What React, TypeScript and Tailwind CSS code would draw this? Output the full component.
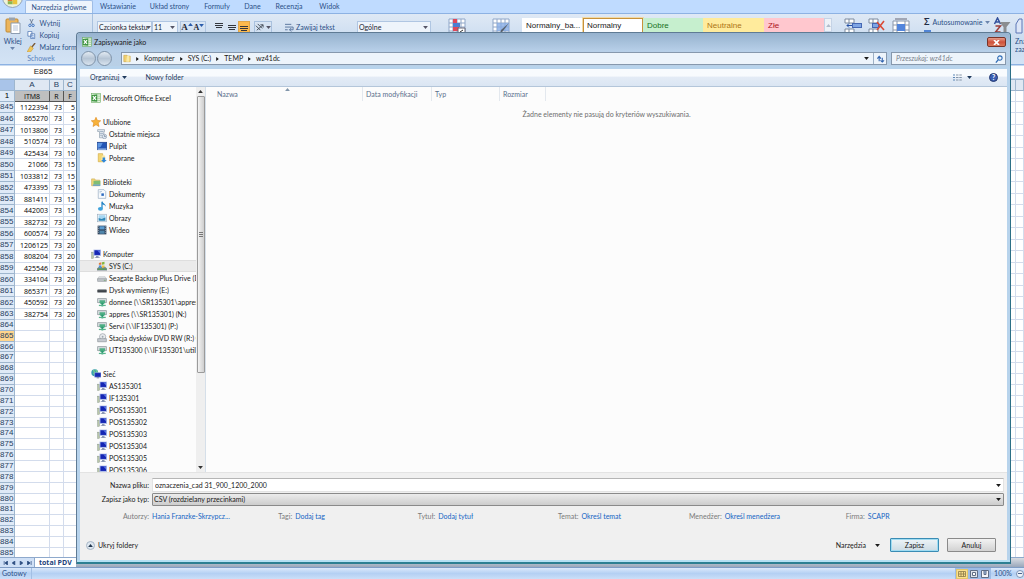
import React from "react";

type IconName =
  | "excel" | "star" | "recent" | "desktop" | "downloads" | "library" | "document" | "music"
  | "picture" | "video" | "computer" | "system" | "drive" | "removable" | "netdrive" | "dvd"
  | "network" | "host";

function Icon({ name }: { name: IconName }) {
  return (
    <svg viewBox="0 0 16 16" className="h-[10px] w-[10px] shrink-0" aria-hidden="true">
      {name === "excel" && (
        <>
          <rect x="1" y="1" width="14" height="14" fill="#e4f4e0" stroke="#6fae68" />
          <path d="M10 3h5M10 6h5M10 9h5M10 12h5" stroke="#8cc084" />
          <path d="M1 3l9-1v12l-9-1z" fill="#3d9440" />
          <path d="M3 5l5 6M8 5l-5 6" stroke="#fff" strokeWidth="2" />
        </>
      )}
      {name === "star" && (
        <path d="M8 0.5l2.3 5 5.2.5-4 3.6 1.3 5.6L8 12.300l-4.800 2.900 1.300-5.600-4-3.600 5.200-.5z" fill="#f7b23a" stroke="#e08a1c" />
      )}
      {name === "recent" && (
        <>
          <path d="M1 1h11v3h-1v10H4V4H1z" fill="#e3e9ef" stroke="#8796a6" />
          <path d="M5 4h5M5 7h5M5 10h3" stroke="#7c93ad" />
          <circle cx="12" cy="12" r="3.500" fill="#dde8f3" stroke="#8494a6" />
          <path d="M12 10v2h2" stroke="#58687a" fill="none" />
        </>
      )}
      {name === "desktop" && (
        <>
          <rect x="0.500" y="2" width="15" height="12" fill="#2255b5" stroke="#173a86" />
          <path d="M1 3h8l-3 6-5 2z" fill="#5d95e2" />
          <rect x="1" y="12" width="14" height="2" fill="#9fc0ec" />
        </>
      )}
      {name === "downloads" && (
        <>
          <path d="M2 1h7l1 13H2z" fill="#f4d673" stroke="#d0a83e" />
          <path d="M8 4h5v9H6z" fill="#f9e7a3" />
          <path d="M9 7h4v4h2.500L11 15.500 6.500 11H9z" fill="#2f87d8" />
        </>
      )}
      {name === "library" && (
        <>
          <path d="M1 3h5l1 2h7v9H1z" fill="#f2d777" stroke="#ccaa4f" />
          <rect x="4" y="6" width="11" height="6" fill="#7fbd74" />
          <path d="M3 12h12v2H3z" fill="#4f9bd6" />
        </>
      )}
      {name === "document" && (
        <>
          <path d="M2 1h9l3 3v11H2z" fill="#f7fafd" stroke="#8fa5be" />
          <path d="M4 4h4M4 6h2" stroke="#9cb3cc" />
          <rect x="7" y="7" width="4" height="4" fill="#2d6ac0" />
        </>
      )}
      {name === "music" && (
        <>
          <path d="M8 1v11" stroke="#2484c6" strokeWidth="2" />
          <path d="M8 0c1 4 6 4 6 9-1-3-3-3-6-4z" fill="#2484c6" />
          <ellipse cx="5.500" cy="12.500" rx="4" ry="3" fill="#3ea2dc" />
        </>
      )}
      {name === "picture" && (
        <>
          <rect x="1" y="2" width="14" height="12" fill="#fff" stroke="#94a9bd" />
          <rect x="2.500" y="3.500" width="11" height="5" fill="#a5d6f2" />
          <path d="M2.500 8l5 1 6-2v5.500h-11z" fill="#2c86b8" />
        </>
      )}
      {name === "video" && (
        <>
          <rect x="1" y="1" width="14" height="14" fill="#34475e" />
          <rect x="4" y="2" width="8" height="5" fill="#5b9bcf" />
          <rect x="4" y="9" width="8" height="5" fill="#4f86ac" />
          <path d="M2.500 2v12M13.500 2v12" stroke="#c4cfda" strokeDasharray="1.500 1.500" />
        </>
      )}
      {(name === "computer" || name === "host") && (
        <>
          <rect x="1" y="5" width="3" height="10" fill="#b9c6a8" stroke="#76857b" strokeWidth="0.600" />
          <rect x="4" y="1" width="12" height="10" fill="#a9b8e6" />
          <rect x="5.500" y="2" width="9" height="7.500" fill="#1526b4" />
          <path d="M10 2h4.500v5z" fill="#5874e2" />
          <path d="M8 11h4v2h2v1.500H6V13h2z" fill="#8d99b5" />
        </>
      )}
      {name === "system" && (
        <>
          <path d="M3 9h10l3 3v3H0v-3z" fill="#7c8791" />
          <path d="M1 12h14v2H1z" fill="#4f9a50" />
          <path d="M3 3l4-1v4H3z" fill="#dc7a3c" />
          <path d="M8 2l4-1v4l-4 1z" fill="#85b640" />
          <path d="M3 7h4v4H3z" fill="#4f94d4" />
          <path d="M8 7h4v3l-4 1z" fill="#efc441" />
        </>
      )}
      {name === "drive" && (
        <>
          <path d="M3 6h10l2.500 4H.5z" fill="#e1e4e7" stroke="#a1a7ad" strokeWidth="0.700" />
          <rect x="0.500" y="9" width="15" height="4.500" rx="1" fill="#bec3c8" stroke="#82888e" strokeWidth="0.700" />
          <rect x="11" y="11" width="3" height="1" fill="#5d9e54" />
        </>
      )}
      {name === "removable" && (
        <>
          <rect x="0.500" y="7" width="15" height="5" rx="1" fill="#3f444a" />
          <path d="M2 7.500h12" stroke="#9ba1a8" />
        </>
      )}
      {name === "netdrive" && (
        <>
          <rect x="0.500" y="2.500" width="15" height="6.500" rx="1" fill="#d5dadd" stroke="#7d888c" />
          <path d="M4 5h9v4l-2 2H6L4 9z" fill="#4fae84" />
          <path d="M7 9h3v6H7z" fill="#2f9a72" />
          <path d="M3 12.500h11v2H3z" fill="#57b48c" />
        </>
      )}
      {name === "dvd" && (
        <>
          <circle cx="9" cy="6" r="5" fill="#e8ebee" stroke="#9299a0" />
          <circle cx="9" cy="6" r="1.500" fill="#9fa8b0" />
          <path d="M1 9h14v5H1z" fill="#c5cad0" stroke="#757c83" strokeWidth="0.800" />
        </>
      )}
      {name === "network" && (
        <>
          <circle cx="6" cy="6" r="5.500" fill="#3a9fb0" />
          <path d="M3 2c3 1 3 4 1 6M8 1c0 3 2 3 3 5" stroke="#79cf86" strokeWidth="2" fill="none" />
          <rect x="6" y="6" width="10" height="7" fill="#1829b2" stroke="#93a6df" />
          <path d="M9 13h4v2H9z" fill="#8791ac" />
        </>
      )}
    </svg>
  );
}

function Caret({ className = "" }: { className?: string }) {
  return (
    <svg viewBox="0 0 8 5" className={`h-[3px] w-[5px] shrink-0 ${className}`} aria-hidden="true">
      <path d="M0 0h8L4 5z" fill="currentColor" />
    </svg>
  );
}

/* ---------- Spreadsheet ---------- */

const data: [string, string][] = [
  ["1122394", "5"], ["865270", "5"], ["1013806", "5"], ["510574", "10"], ["425434", "10"],
  ["21066", "15"], ["1033812", "15"], ["473395", "15"], ["881411", "15"], ["442003", "15"],
  ["382732", "20"], ["600574", "20"], ["1206125", "20"], ["808204", "20"], ["425546", "20"],
  ["334104", "20"], ["865371", "20"], ["450592", "20"], ["382754", "20"],
];

function rowHeight(i: number) {
  if (i < data.length) return i % 2 === 0 ? "h-[11px]" : "h-[12px]";
  return i % 7 === 0 ? "h-[10px]" : "h-[11px]";
}

function Sheet() {
  const cell = "border-r border-b border-[#d3dcec] p-0 pr-px text-right";
  const head = "border-r border-b border-[#9eb6ce] p-0 font-normal";
  return (
    <table className="w-full table-fixed border-separate border-spacing-0 bg-white font-['Open_Sans','Noto_Sans',sans-serif] leading-none text-black">
      <colgroup>
        <col className="w-[15px]" />
        <col className="w-[35px]" />
        <col className="w-[14px]" />
        <col className="w-[13px]" />
        <col />
        <col className="w-[8px]" />
      </colgroup>
      <thead className="font-['Liberation_Sans',sans-serif] text-[8px] text-[#27415f]">
        <tr className="h-[11px] bg-[#dfe8f3]">
          <th className={`${head} bg-[#a9c4e9]`}></th>
          <th className={head}>A</th>
          <th className={head}>B</th>
          <th className={head}>C</th>
          <th className={head}></th>
          <th className={head}></th>
        </tr>
      </thead>
      <tbody className="text-[7px]">
        <tr className="h-[11px]">
          <th className={`${head} bg-[#dfeaf7] font-['Liberation_Sans',sans-serif] text-[8px]`}>1</th>
          <td className="border-r border-b border-[#555] bg-[#bfbfbf] p-0 text-center">ITM8</td>
          <td className="border-r border-b border-[#555] bg-[#bfbfbf] p-0 text-center">R</td>
          <td className="border-r border-b border-[#555] bg-[#bfbfbf] p-0 text-center">F</td>
          <td className={cell}></td>
          <td className={cell}></td>
        </tr>
        {Array.from({ length: 41 }, (_, i) => {
          const n = 845 + i;
          return (
            <tr key={n} className={rowHeight(i)}>
              <th
                className={`border-r border-b border-[#9eb6ce] p-0 pr-px text-right font-['Liberation_Sans',sans-serif] text-[8px] font-normal text-[#27415f] ${
                  n === 865 ? "bg-[#ffd58d]" : "bg-[#dfeaf7]"
                }`}
              >
                {n}
              </th>
              <td className={cell}>{data[i]?.[0]}</td>
              <td className={cell}>{data[i] ? "73" : ""}</td>
              <td className={cell}>{data[i]?.[1]}</td>
              <td className={cell}></td>
              <td className={cell}></td>
            </tr>
          );
        })}
      </tbody>
    </table>
  );
}

/* ---------- Ribbon ---------- */

function AlignIcon({ rows }: { rows: string }) {
  return (
    <svg viewBox="0 0 10 10" className="h-[10px] w-[10px]" aria-hidden="true">
      <path d={rows} stroke="#33363c" strokeWidth="1" />
    </svg>
  );
}

function CellsIcon({ kind }: { kind: "insert" | "delete" | "format" }) {
  return (
    <svg viewBox="0 0 18 18" className="h-[18px] w-[18px] shrink-0" aria-hidden="true">
      {kind === "format" ? (
        <>
          <path d="M1 3h16v13H1zM1 7h16M1 12h16M5 3v13M13 3v13" fill="#fff" stroke="#8a97ab" />
          <rect x="5" y="6" width="8" height="7" fill="#5285dc" />
          <path d="M3 1h12" stroke="#667" />
        </>
      ) : (
        <>
          <path d="M1 1h9v4H1zM1 11h9v5H1zM5 1v4M5 11v5" fill="#fff" stroke="#7d8a9e" />
          {kind === "insert" ? (
            <>
              <rect x="8.500" y="5.500" width="9" height="4" fill="#7fa5e4" stroke="#4568b4" />
              <path d="M3 7.500h5M5 5.500l-2 2 2 2" stroke="#234fa5" fill="none" />
            </>
          ) : (
            <>
              <rect x="4.500" y="5.500" width="6" height="4" fill="#7fa5e4" stroke="#4568b4" />
              <path d="M9 4l7 8M16 3l-7 9" stroke="#d94a37" strokeWidth="1.600" />
            </>
          )}
        </>
      )}
    </svg>
  );
}

function Ribbon() {
  const tabs = [
    ["Wstawianie", "w-[50px]"], ["Układ strony", "w-[53px]"], ["Formuły", "w-[42px]"],
    ["Dane", "w-[29px]"], ["Recenzja", "w-[44px]"], ["Widok", "w-[37px]"],
  ];
  return (
    <header className="text-[7px] text-[#2b4f86]">
      <nav className="flex h-[13px] items-stretch bg-[#bfdbff]">
        <div className="relative w-[25px]">
          <button type="button" aria-label="Przycisk pakietu Office" className="absolute -top-[13px] left-0.5 h-[21px] w-[21px] overflow-hidden rounded-full border border-[#93a2ba] bg-[#eef3d8]">
            <svg viewBox="0 0 20 20" className="h-full w-full" aria-hidden="true">
              <path d="M5 9h5v5H5z" fill="#e2792f" />
              <path d="M10 12h5v5h-5z" fill="#e9c53c" />
              <path d="M5 14h5v3H5z" fill="#8bb550" />
            </svg>
          </button>
        </div>
        <button type="button" className="w-[68px] rounded-t-[2px] border-x border-t border-[#9fbde6] bg-[#edf4fc] whitespace-nowrap">Narzędzia główne</button>
        {tabs.map(([t, w]) => (
          <button key={t} type="button" className={`${w} text-center whitespace-nowrap`}>{t}</button>
        ))}
      </nav>
      <div className="flex h-[52px] items-start overflow-hidden border-y border-[#8db2e3] bg-linear-to-b from-[#dfe9f5] via-[#cbdcf0] to-[#d3e3f5]">
        <section className="flex h-full w-[93px] shrink-0 flex-col border-r border-[#a9c1de]">
          <div className="flex h-[39px] pt-[3px]">
            <button type="button" className="flex w-[28px] flex-col items-center leading-[8px]">
              <svg viewBox="0 0 16 17" className="h-[17px] w-[16px]" aria-hidden="true">
                <rect x="1" y="2" width="12" height="13" rx="1" fill="#ecb55c" stroke="#c08a35" />
                <rect x="4" y="0.500" width="6" height="3" fill="#9aa3ae" />
                <path d="M6 6h9v10.500H6z" fill="#fff" stroke="#8d9db2" />
                <path d="M8 9h5M8 11h5M8 13h5" stroke="#b6c4d8" />
              </svg>
              <span className="mt-[3px]">Wklej</span>
              <Caret className="mt-0.5 text-[#6b85ad]" />
            </button>
            <div className="flex flex-col pl-px whitespace-nowrap">
              <button type="button" className="flex h-[12px] items-center gap-1">
                <svg viewBox="0 0 10 10" className="h-[8px] w-[9px]" aria-hidden="true">
                  <path d="M3 0l3 6M7 0L4 6" stroke="#5a6c86" />
                  <circle cx="3" cy="8" r="1.500" fill="none" stroke="#2b63b8" />
                  <circle cx="7" cy="8" r="1.500" fill="none" stroke="#2b63b8" />
                </svg>
                Wytnij
              </button>
              <button type="button" className="flex h-[12px] items-center gap-1">
                <svg viewBox="0 0 10 10" className="h-[8px] w-[9px]" aria-hidden="true">
                  <path d="M.5.5h5v6h-5zM4 3.500h5v6H4z" fill="#fff" stroke="#5279b5" />
                  <path d="M5 6h3M5 8h3" stroke="#5f8fd6" />
                </svg>
                Kopiuj
              </button>
              <button type="button" className="flex h-[12px] items-center gap-1">
                <svg viewBox="0 0 10 10" className="h-[9px] w-[9px]" aria-hidden="true">
                  <path d="M5 5L9 0" stroke="#7b5a38" strokeWidth="1.500" />
                  <path d="M4 3l3 3-3 4H0z" fill="#f0c65a" stroke="#b98a2c" strokeWidth="0.500" />
                </svg>
                Malarz formatów
              </button>
            </div>
          </div>
          <div className="flex-1 pr-[10px] text-center leading-[11px] text-[#5b84bd]">Schowek</div>
        </section>

        <div className="flex h-[26px] shrink-0 items-center pl-[4px] text-[#1c2633]">
          <div className="relative h-[13px] w-[55px]">
            <select aria-label="Czcionka" className="h-full w-full appearance-none border border-[#b0c6e2] bg-[#eef4fb] pl-px">
              <option>Czcionka tekstu</option>
            </select>
            <Caret className="absolute top-[5px] right-px text-[#556]" />
          </div>
          <div className="relative h-[13px] w-[26px]">
            <select aria-label="Rozmiar czcionki" className="h-full w-full appearance-none border border-[#b0c6e2] bg-[#eef4fb] pl-px">
              <option>11</option>
            </select>
            <Caret className="absolute top-[5px] right-[3px] text-[#556]" />
          </div>
          <div className="ml-0.5 flex h-[13px] border border-[#b0c6e2] font-['Liberation_Serif',serif] font-bold">
            <button type="button" aria-label="Zwiększ rozmiar czcionki" className="flex w-[12px] justify-center pt-px text-[9px] leading-none">
              A<Caret className="rotate-180 text-[#2b5cab]" />
            </button>
            <button type="button" aria-label="Zmniejsz rozmiar czcionki" className="flex w-[12px] justify-center pt-0.5 text-[8px] leading-none">
              A<Caret className="text-[#2b5cab]" />
            </button>
          </div>
          <div className="ml-[6px] flex">
            <button type="button" aria-label="Wyrównaj do góry" className="flex w-[13px] items-center justify-center"><AlignIcon rows="M1 1.500h8M1 3.500h8M2 5.500h6" /></button>
            <button type="button" aria-label="Wyrównaj do środka" className="flex w-[13px] items-center justify-center"><AlignIcon rows="M1 3.500h8M1 5.500h8M2 7.500h6" /></button>
            <button type="button" aria-label="Wyrównaj do dołu" className="flex h-[12px] w-[12px] items-center justify-center border border-[#e0a64a] bg-[#fdb94d]"><AlignIcon rows="M1 4.500h8M1 6.500h8M2 8.500h6" /></button>
          </div>
          <button type="button" aria-label="Orientacja" className="ml-1 flex h-[13px] w-[18px] items-center justify-center gap-0.5 border border-[#a9c1de]">
            <svg viewBox="0 0 10 10" className="h-[9px] w-[9px]" aria-hidden="true">
              <path d="M1 3l5 5M3 1l5 5M2 8l7-6M6 2h3v3" stroke="#3f4752" fill="none" />
            </svg>
            <Caret className="text-[#556]" />
          </button>
          <button type="button" className="ml-[13px] flex w-[66px] items-center gap-0.5 whitespace-nowrap text-[#2b4f86]">
            <svg viewBox="0 0 10 10" className="h-[9px] w-[9px]" aria-hidden="true">
              <path d="M0 1.500h7M0 4.500h9v3H5M7 5.500l-2 2 2 2M0 7.500h3" stroke="#53709a" fill="none" />
            </svg>
            Zawijaj tekst
          </button>
          <div className="relative ml-[6px] h-[13px] w-[74px]">
            <select aria-label="Format liczb" className="h-full w-full appearance-none border border-[#b0c6e2] bg-[#eef4fb] pl-px">
              <option>Ogólne</option>
            </select>
            <Caret className="absolute top-[5px] right-[3px] text-[#556]" />
          </div>
        </div>

        <div className="flex h-[34px] shrink-0 items-start pt-[4px]">
          <button type="button" aria-label="Formatowanie warunkowe" className="ml-[17px]">
            <svg viewBox="0 0 18 18" className="h-[18px] w-[18px]" aria-hidden="true">
              <path d="M1 1h16v16H1zM1 5h16M1 9h16M1 13h16M5 1v16M9 1v16M13 1v16" fill="#fff" stroke="#8fa6c8" />
              <path d="M5 1h4v4H5zM5 9h6v4H5z" fill="#e0485a" />
              <path d="M5 5h7v4H5z" fill="#4d7fd0" />
              <path d="M10 10h7v7h-7z" fill="#fff" stroke="#667" />
              <path d="M12 14l3-2M12 15.500h3" stroke="#333" />
            </svg>
          </button>
          <button type="button" aria-label="Formatuj jako tabelę" className="ml-[26px]">
            <svg viewBox="0 0 18 18" className="h-[18px] w-[18px]" aria-hidden="true">
              <path d="M1 1h16v16H1zM1 5h16M1 9h16M1 13h16M5 1v16M9 1v16M13 1v16" fill="#fff" stroke="#8fa6c8" />
              <path d="M5 5h12v8H5z" fill="#86abe4" opacity="0.800" />
              <path d="M17 5l-6 8-3 3 1-4z" fill="#59626f" />
            </svg>
          </button>
          <div className="ml-[12px] flex h-[30px] items-start bg-[#eef4fb] font-['Liberation_Sans',sans-serif] text-[8px] leading-[16px]">
            <button type="button" className="h-[16px] w-[61px] bg-white pl-[4px] text-left text-[#222]">Normalny_ba...</button>
            <button type="button" className="h-[16px] w-[60px] border border-[#c8923a] bg-white pl-[3px] text-left leading-[14px] text-[#222] outline outline-[#f0d9a8]">Normalny</button>
            <button type="button" className="h-[16px] w-[60px] bg-[#c6efce] pl-[4px] text-left text-[#17701d]">Dobre</button>
            <button type="button" className="h-[16px] w-[61px] bg-[#ffeb9c] pl-[4px] text-left text-[#ad7416]">Neutralne</button>
            <button type="button" className="h-[16px] w-[60px] bg-[#ffc7ce] pl-[4px] text-left text-[#b01620]">Złe</button>
            <button type="button" aria-label="Poprzednie style" className="flex h-[14px] w-[8px] items-center justify-center border border-[#c5d3e6] bg-[#eef2f8]">
              <Caret className="rotate-180 text-[#b1bccb]" />
            </button>
          </div>
          <div className="ml-[12px] flex gap-[6px]">
            <button type="button" aria-label="Wstaw komórki"><CellsIcon kind="insert" /></button>
            <button type="button" aria-label="Usuń komórki"><CellsIcon kind="delete" /></button>
            <button type="button" aria-label="Formatuj komórki"><CellsIcon kind="format" /></button>
          </div>
        </div>
        <div className="ml-[14px] flex w-[68px] shrink-0 flex-col gap-[3px] pt-[3px]">
          <button type="button" className="flex items-center gap-[3px] leading-[10px] whitespace-nowrap">
            <span className="text-[9px] font-bold text-[#1f2c44]">Σ</span> Autosumowanie <Caret className="text-[#6b85ad]" />
          </button>
          <span className="h-[3px] w-[7px] bg-[#5185d6]" />
        </div>
        <button type="button" aria-label="Sortuj i filtruj" className="shrink-0 pt-[3px]">
          <svg viewBox="0 0 18 18" className="h-[18px] w-[19px]" aria-hidden="true">
            <path d="M2 7L5 1l3 6M3 5h4" stroke="#33509c" strokeWidth="1.500" fill="none" />
            <path d="M3 9h5l-5 6h5" stroke="#9c3e3a" strokeWidth="1.500" fill="none" />
            <path d="M7 5h11l-4 5v7l-3-2v-5z" fill="#8b8d90" />
          </svg>
        </button>
        <button type="button" className="ml-[4px] min-w-0 flex-1 overflow-hidden pt-[3px] text-left leading-[8px]">
          <svg viewBox="0 0 18 18" className="h-[18px] w-[18px]" aria-hidden="true">
            <path d="M1 16V7l3-5h3v14zM10 16V2h3l3 5v9z" fill="#dde6f7" stroke="#5c76b6" />
          </svg>
          <span className="mt-[2px] block whitespace-nowrap">Znajdź i<br />zaznacz</span>
        </button>
      </div>
    </header>
  );
}

/* ---------- Save dialog ---------- */

type Node = { label: string; icon: IconName; level: 0 | 1; selected?: boolean } | null;

const tree: Node[] = [
  { label: "Microsoft Office Excel", icon: "excel", level: 0 },
  null,
  { label: "Ulubione", icon: "star", level: 0 },
  { label: "Ostatnie miejsca", icon: "recent", level: 1 },
  { label: "Pulpit", icon: "desktop", level: 1 },
  { label: "Pobrane", icon: "downloads", level: 1 },
  null,
  { label: "Biblioteki", icon: "library", level: 0 },
  { label: "Dokumenty", icon: "document", level: 1 },
  { label: "Muzyka", icon: "music", level: 1 },
  { label: "Obrazy", icon: "picture", level: 1 },
  { label: "Wideo", icon: "video", level: 1 },
  null,
  { label: "Komputer", icon: "computer", level: 0 },
  { label: "SYS (C:)", icon: "system", level: 1, selected: true },
  { label: "Seagate Backup Plus Drive (D", icon: "drive", level: 1 },
  { label: "Dysk wymienny (E:)", icon: "removable", level: 1 },
  { label: "donnee (\\\\SR135301\\appres)", icon: "netdrive", level: 1 },
  { label: "appres (\\\\SR135301) (N:)", icon: "netdrive", level: 1 },
  { label: "Servi (\\\\IF135301) (P:)", icon: "netdrive", level: 1 },
  { label: "Stacja dysków DVD RW (R:) C", icon: "dvd", level: 1 },
  { label: "UT135300 (\\\\IF135301\\utilis$)", icon: "netdrive", level: 1 },
  null,
  { label: "Sieć", icon: "network", level: 0 },
  { label: "AS135301", icon: "host", level: 1 },
  { label: "IF135301", icon: "host", level: 1 },
  { label: "POS135301", icon: "host", level: 1 },
  { label: "POS135302", icon: "host", level: 1 },
  { label: "POS135303", icon: "host", level: 1 },
  { label: "POS135304", icon: "host", level: 1 },
  { label: "POS135305", icon: "host", level: 1 },
  { label: "POS135306", icon: "host", level: 1 },
];

function Sidebar() {
  return (
    <nav className="flex w-[126px] shrink-0 overflow-hidden bg-[#fcfcfc]">
      <ul className="min-w-0 flex-1 overflow-hidden pt-[5px]">
        {tree.map((n, i) =>
          n === null ? (
            <li key={i} className="h-[12px]" />
          ) : (
            <li key={i}>
              <button
                type="button"
                className={`flex h-[12px] w-full items-center gap-[2px] text-left whitespace-nowrap text-[#1a1a1a] ${
                  n.level === 0 ? "pl-[11px]" : "pl-[17px]"
                } ${n.selected ? "border-y border-[#dedede] bg-[#ebebeb]" : ""}`}
              >
                <Icon name={n.icon} />
                {n.label}
              </button>
            </li>
          ),
        )}
      </ul>
      <div className="flex w-[10px] flex-col items-center border-r border-[#d5dfe9] bg-[#efefef] text-[#333]">
        <div className="flex h-[9px] items-center"><Caret className="rotate-180" /></div>
        <div className="flex h-[277px] w-[8px] flex-col items-center justify-center gap-px rounded-[1px] border border-[#9b9b9b] bg-linear-to-r from-[#f3f3f3] to-[#cfcfcf]">
          <span className="h-px w-[4px] bg-[#777]" />
          <span className="h-px w-[4px] bg-[#777]" />
          <span className="h-px w-[4px] bg-[#777]" />
        </div>
        <div className="flex-1" />
        <div className="flex h-[10px] items-center"><Caret /></div>
      </div>
    </nav>
  );
}

function FileList() {
  const th = "h-[14px] border-r border-[#e3e8ee] p-0 pl-[3px] text-left font-normal text-[#5a6f8c]";
  return (
    <div className="relative min-w-0 flex-1 bg-[#fcfcfc]">
      <table className="w-full table-fixed border-separate border-spacing-0">
        <colgroup>
          <col className="w-[157px]" />
          <col className="w-[69px]" />
          <col className="w-[68px]" />
          <col className="w-[46px]" />
          <col />
        </colgroup>
        <thead>
          <tr>
            <th className={`${th} pl-[11px]`}>Nazwa</th>
            <th className={th}>Data modyfikacji</th>
            <th className={th}>Typ</th>
            <th className={th}>Rozmiar</th>
            <th></th>
          </tr>
        </thead>
        <tbody>
          <tr>
            <td colSpan={5} className="h-[26px] text-center text-[#6d6d6d]">
              Żadne elementy nie pasują do kryteriów wyszukiwania.
            </td>
          </tr>
        </tbody>
      </table>
      <Caret className="absolute top-px left-[79px] rotate-180 text-[#8296ab]" />
    </div>
  );
}

const properties = [
  ["Autorzy:", "Hania Franzke-Skrzypcz..."],
  ["Tagi:", "Dodaj tag"],
  ["Tytuł:", "Dodaj tytuł"],
  ["Temat:", "Określ temat"],
  ["Menedżer:", "Określ menedżera"],
  ["Firma:", "SCAPR"],
];

function SaveDialog() {
  const crumbs = ["Komputer", "SYS (C:)", "TEMP", "wz41dc"];
  return (
    <div
      role="dialog"
      aria-label="Zapisywanie jako"
      className="absolute top-8 right-[13px] bottom-[15px] left-[76px] flex flex-col rounded-t-[4px] border border-t-[#5f7b94] border-r-[#2c6f86] border-b-[#2c7f92] border-l-[#5f7b94] bg-[#b7d3ec] text-[7px] text-[#1a1a1a]"
    >
      <div className="flex h-[18px] shrink-0 items-center rounded-t-[4px] bg-linear-to-b from-[#96b2ce] to-[#b7cfe8] pl-[5px]">
        <Icon name="excel" />
        <span className="ml-[2px]">Zapisywanie jako</span>
        <button type="button" aria-label="Zamknij" className="mr-1 ml-auto flex h-[10px] w-[19px] items-center justify-center rounded-[2px] border border-[#7a3328] bg-linear-to-b from-[#e39c8c] via-[#cf513b] to-[#d9785c]">
          <svg viewBox="0 0 8 6" className="h-[5px] w-[7px]" aria-hidden="true">
            <path d="M1 0l6 6M7 0L1 6" stroke="#fff" strokeWidth="2" />
          </svg>
        </button>
      </div>

      <div className="flex h-[15px] shrink-0 items-center bg-linear-to-b from-[#b7cfe8] to-[#b9d0e6] pr-[4px] pl-[4px]">
        <button type="button" aria-label="Wstecz" className="h-[15px] w-[15px] rounded-full border border-[#7f93a9] bg-linear-to-b from-[#e3ebf3] via-[#b6c5d5] to-[#d9e4ef]" />
        <button type="button" aria-label="Dalej" className="ml-px h-[15px] w-[15px] rounded-full border border-[#7f93a9] bg-linear-to-b from-[#e3ebf3] via-[#b6c5d5] to-[#d9e4ef]" />
        <div className="ml-[9px] flex h-[13px] flex-1 items-center border border-[#8698ad] bg-[#edf4fb] pl-px">
          <svg viewBox="0 0 10 10" className="h-[9px] w-[8px]" aria-hidden="true">
            <path d="M1 1h4l1 1h3v7H1z" fill="#efd072" stroke="#c9a03e" strokeWidth="0.700" />
            <path d="M5 2h3v7H4z" fill="#fae9a6" />
          </svg>
          {crumbs.map((c) => (
            <React.Fragment key={c}>
              <svg viewBox="0 0 4 6" className="mx-[5px] h-[4px] w-[3px] shrink-0" aria-hidden="true">
                <path d="M0 0l4 3-4 3z" fill="#111" />
              </svg>
              <button type="button" className="whitespace-nowrap">{c}</button>
            </React.Fragment>
          ))}
          <button type="button" aria-label="Poprzednie lokalizacje" className="ml-auto flex h-full w-[13px] items-center justify-center"><Caret /></button>
          <button type="button" aria-label="Odśwież" className="flex h-full w-[13px] items-center justify-center border-l border-[#9db0c5]">
            <svg viewBox="0 0 9 9" className="h-[8px] w-[9px]" aria-hidden="true">
              <path d="M3 7V2M1 4l2-2.500L5 4" stroke="#2f62ae" fill="none" strokeWidth="1.200" />
              <path d="M6.500 3v5M4.500 6l2 2 2-2" stroke="#2f62ae" fill="none" strokeWidth="1.200" />
            </svg>
          </button>
        </div>
        <label className="ml-[4px] flex h-[13px] w-[115px] items-center border border-[#8698ad] bg-[#edf4fb] pr-[2px] pl-[4px]">
          <input type="text" aria-label="Przeszukaj" placeholder="Przeszukaj: wz41dc" className="min-w-0 flex-1 bg-transparent italic outline-none placeholder:text-[#7a828c]" />
          <svg viewBox="0 0 9 9" className="h-[8px] w-[8px]" aria-hidden="true">
            <circle cx="5.500" cy="3.500" r="2.500" fill="none" stroke="#2d6bb5" strokeWidth="1.200" />
            <path d="M3.500 5.500L1 8.500" stroke="#2d6bb5" strokeWidth="1.500" />
          </svg>
        </label>
      </div>

      <div className="mx-[3px] flex min-h-0 flex-1 flex-col">
        <div className="mt-[3px] flex h-[18px] shrink-0 items-center border-b border-[#b4c6da] bg-linear-to-b from-[#f8fbfe] from-40% via-[#e3ebf6] via-50% to-[#dbe6f3] pl-[10px] text-[#1e395b]">
          <button type="button" className="flex items-center gap-[3px]">Organizuj <Caret /></button>
          <button type="button" className="ml-[18px]">Nowy folder</button>
          <button type="button" aria-label="Zmień widok" className="ml-auto flex items-center gap-[5px]">
            <svg viewBox="0 0 9 7" className="h-[7px] w-[9px]" aria-hidden="true">
              <path d="M0 1h2M0 3.500h2M0 6h2" stroke="#5b86b5" />
              <path d="M3 1h6M3 3.500h6M3 6h6" stroke="#8495a8" strokeDasharray="2.500 0.800" />
            </svg>
            <Caret />
          </button>
          <button type="button" aria-label="Pomoc" className="mr-[9px] ml-[17px] flex h-[9px] w-[9px] items-center justify-center rounded-full border border-[#23376e] bg-[#3b5fb4] text-[7px] leading-none font-bold text-white">?</button>
        </div>

        <div className="flex min-h-0 flex-1">
          <Sidebar />
          <FileList />
        </div>

        <form className="flex h-[88px] shrink-0 flex-col border-t border-[#e3e3e3] bg-[#f0f0f0] pr-[3px]" onSubmit={(e) => e.preventDefault()}>
          <div className="mt-[5px] flex h-[14px] items-center">
            <label htmlFor="name" className="mr-[3px] w-[69px] shrink-0 text-right">Nazwa pliku:</label>
            <div className="relative h-full flex-1">
              <input id="name" type="text" defaultValue="oznaczenia_cad 31_900_1200_2000" className="h-full w-full border border-[#e3e3e3] border-t-[#b5b5b5] bg-white pl-[2px] outline-none" />
              <Caret className="absolute top-[6px] right-[3px]" />
            </div>
          </div>
          <div className="mt-px flex h-[13px] items-center">
            <label htmlFor="type" className="mr-[3px] w-[69px] shrink-0 text-right">Zapisz jako typ:</label>
            <div className="relative h-full flex-1">
              <select id="type" className="h-full w-full appearance-none rounded-[1px] border border-[#8a8a8a] bg-linear-to-b from-[#ececec] to-[#cdcdcd] pl-px">
                <option>CSV (rozdzielany przecinkami)</option>
              </select>
              <Caret className="absolute top-[5px] right-[3px]" />
            </div>
          </div>
          <dl className="mt-[4px] grid h-[12px] grid-cols-6 items-center pr-[65px] whitespace-nowrap">
            {properties.map(([k, v]) => (
              <div key={k} className="flex min-w-0 gap-[3px]">
                <dt className="w-[69px] shrink-0 text-right text-[#7a7a7a]">{k}</dt>
                <dd><button type="button" className="text-[#1465c4]">{v}</button></dd>
              </div>
            ))}
          </dl>
          <div className="mt-auto mb-[8px] flex h-[14px] items-center pr-[8px] pl-[6px]">
            <button type="button" className="flex items-center gap-[3px]">
              <span className="flex h-[9px] w-[9px] items-center justify-center rounded-full border border-[#a7b6c6] bg-[#dfe8f1] text-[#24384f]"><Caret className="rotate-180" /></span>
              Ukryj foldery
            </button>
            <button type="button" className="mr-[10px] ml-auto flex items-center gap-[9px]">Narzędzia <Caret /></button>
            <button type="submit" className="h-[14px] w-[49px] rounded-[1px] border border-[#3a8cb4] bg-linear-to-b from-[#eef4f7] to-[#cbdbe4] outline -outline-offset-2 outline-[#9fdcf2]">Zapisz</button>
            <button type="button" className="ml-[8px] h-[14px] w-[49px] rounded-[1px] border border-[#8a8a8a] bg-linear-to-b from-[#f3f3f3] to-[#d2d2d2]">Anuluj</button>
          </div>
        </form>
      </div>
      <div className="h-[3px] shrink-0 border-b border-[#2c7f92] bg-[#b5e0f3]" />
    </div>
  );
}

/* ---------- Footer of the workbook window ---------- */

function SheetTabs() {
  return (
    <div className="flex h-[10px] shrink-0 items-center border-t border-[#8ea9cc] bg-[#b3cbea]">
      <div className="flex h-full w-[35px] items-center justify-around border-r border-[#8ea9cc] bg-[#cfe0f6] px-px">
        {["M1 0v6M6 0L2 3l4 3z", "M5 0L1 3l4 3z", "M1 0l4 3-4 3z", "M0 0l4 3-4 3zM5.500 0v6"].map((d) => (
          <button key={d} type="button" aria-label="Przewiń arkusze">
            <svg viewBox="0 0 6 6" className="h-[4px] w-[5px]" aria-hidden="true"><path d={d} fill="#27487c" stroke="#27487c" /></svg>
          </button>
        ))}
      </div>
      <button type="button" className="h-full bg-white px-[4px] font-['Open_Sans','Noto_Sans',sans-serif] text-[7px] leading-[9px] font-bold whitespace-nowrap text-[#22427a]">total PDV</button>
      <div className="h-full flex-1 bg-linear-to-b from-[#d9dde3] to-[#9aa7ba]" />
    </div>
  );
}

function StatusBar() {
  return (
    <footer className="flex h-[12px] shrink-0 items-center overflow-hidden border-t border-[#7f9dc6] bg-linear-to-b from-[#dbe9fb] via-[#b4d0f3] to-[#cbdff8] text-[7px] text-[#2b4f86]">
      <span className="border-r border-[#a3bfe4] pr-[4px] pl-[2px]">Gotowy</span>
      <div className="ml-auto flex h-full items-center gap-px bg-[#9dbce6] px-px">
        <button type="button" aria-label="Normalny" className="flex h-[10px] w-[12px] items-center justify-center border border-[#e3c768] bg-[#fbe08d]">
          <svg viewBox="0 0 8 6" className="h-[6px] w-[8px]" aria-hidden="true"><path d="M.5.5h7v5h-7zM.5 3h7M3 .5v5M5.500.5v5" fill="none" stroke="#8a7a48" strokeWidth="0.800" /></svg>
        </button>
        <button type="button" aria-label="Układ strony" className="flex h-[10px] w-[10px] items-center justify-center">
          <svg viewBox="0 0 8 8" className="h-[8px] w-[8px]" aria-hidden="true"><path d="M.5.5h7v7h-7z" fill="#dfe5ec" stroke="#5f6e85" /><path d="M2.500 2.500h3v3h-3z" fill="#fff" stroke="#5f6e85" /></svg>
        </button>
        <button type="button" aria-label="Podgląd podziału stron" className="flex h-[10px] w-[10px] items-center justify-center">
          <svg viewBox="0 0 8 8" className="h-[8px] w-[8px]" aria-hidden="true"><path d="M.5.5h7v7h-7zM3 .5v4h2v-4" fill="#f4f6f9" stroke="#5f6e85" /></svg>
        </button>
      </div>
      <button type="button" className="w-[24px]">100%</button>
      <button type="button" aria-label="Pomniejsz" className="ml-px flex h-[8px] w-[8px] shrink-0 items-center justify-center rounded-full border border-[#7d93b5] bg-[#eef3fa]">
        <span className="h-px w-[4px] bg-[#4b628b]" />
      </button>
    </footer>
  );
}

export default function App() {
  return (
    <div className="relative flex h-screen flex-col overflow-hidden bg-[#bfdbff] font-['Lato','Open_Sans',sans-serif]">
      <Ribbon />
      <div className="flex h-[15px] shrink-0 items-center border-b border-[#9eb6ce] bg-[#c8daf0]">
        <input type="text" aria-label="Pole nazwy" defaultValue="E865" className="h-[12px] w-[86px] bg-white text-center font-['Liberation_Sans',sans-serif] text-[8px] text-[#222] outline-none" />
        <input type="text" aria-label="Pasek formuły" className="h-[12px] min-w-0 flex-1 bg-white text-[8px] outline-none" />
      </div>
      <main className="min-h-0 flex-1 overflow-hidden">
        <Sheet />
      </main>
      <SheetTabs />
      <StatusBar />
      <SaveDialog />
    </div>
  );
}
